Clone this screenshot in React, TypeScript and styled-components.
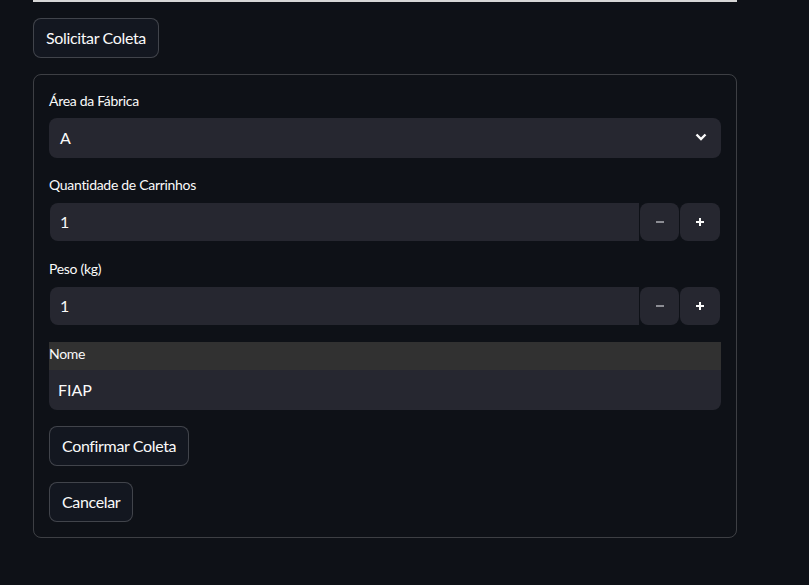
import React from 'react';
import styled, { createGlobalStyle } from 'styled-components';

const Global = createGlobalStyle`
  html, body {
    margin: 0;
    padding: 0;
    background: #0e1117;
  }
  body {
    font-family: Lato, "Source Sans Pro", "Noto Sans", sans-serif;
    color: #fafafa;
  }
`;

const Page = styled.div`
  width: 704px;
  margin-left: 33px;
  display: flex;
  flex-direction: column;
  align-items: flex-start;
  gap: 16px;
  padding-bottom: 47px;
`;

const TopBar = styled.div`
  width: 100%;
  height: 2px;
  background: #d6d6d6;
`;

const Button = styled.button`
  height: 40px;
  padding: 0 12px 1px;
  border: 1px solid rgba(250, 250, 250, 0.2);
  border-radius: 8px;
  background: #131720;
  color: #fafafa;
  font-family: inherit;
  font-size: 16px;
  letter-spacing: -0.35px;
  line-height: 1;
  cursor: pointer;
`;

const Form = styled.div`
  box-sizing: border-box;
  width: 100%;
  padding: 15px 15px;
  border: 1px solid rgba(250, 250, 250, 0.2);
  border-radius: 8px;
  display: flex;
  flex-direction: column;
  align-items: flex-start;
  gap: 16px;
`;

const Field = styled.div`
  width: 100%;
  display: flex;
  flex-direction: column;
`;

const Label = styled.label`
  height: 22px;
  line-height: 22px;
  margin-bottom: 6px;
  font-size: 14px;
  letter-spacing: -0.3px;
  color: #fafafa;
`;

const Select = styled.div`
  height: 40px;
  box-sizing: border-box;
  padding: 0 14px 2px 11px;
  border-radius: 8px;
  background: #262730;
  display: flex;
  align-items: center;
  justify-content: space-between;
  font-size: 16px;
`;

const NumberWrap = styled.div`
  height: 40px;
  box-sizing: border-box;
  border: 1px solid transparent;
  display: flex;
  gap: 1px;
`;

const NumberInput = styled.div`
  flex: 1;
  background: #262730;
  border-radius: 8px 0 0 8px;
  padding: 0 0 2px 10px;
  display: flex;
  align-items: center;
  font-size: 16px;
`;

const Step = styled.div<{ $w: number }>`
  width: ${(p) => p.$w}px;
  background: #262730;
  border-radius: 8px;
  display: flex;
  align-items: center;
  justify-content: center;
`;

const NameLabel = styled.div`
  height: 28px;
  line-height: 24px;
  background: #313131;
  font-size: 14px;
  letter-spacing: -0.3px;
`;

const TextInput = styled.div`
  height: 40px;
  box-sizing: border-box;
  background: #262730;
  border-radius: 0 0 8px 8px;
  padding: 0 0 2px 9px;
  display: flex;
  align-items: center;
  font-size: 16px;
`;

const Chevron = () => (
  <svg width="12" height="8" viewBox="0 0 12 8">
    <polyline points="1.5,1.5 6,6 10.5,1.5" fill="none" stroke="#fafafa" strokeWidth="2.4" />
  </svg>
);

const Minus = () => (
  <svg width="10" height="10" viewBox="0 0 10 10">
    <rect x="1" y="4" width="8" height="2" fill="#8c8d94" />
  </svg>
);

const Plus = () => (
  <svg width="10" height="10" viewBox="0 0 10 10">
    <rect x="1" y="4" width="8" height="2" fill="#fafafa" />
    <rect x="4" y="1" width="2" height="8" fill="#fafafa" />
  </svg>
);

const NumberField = ({ label, value }: { label: string; value: string }) => (
  <Field>
    <Label>{label}</Label>
    <NumberWrap>
      <NumberInput>{value}</NumberInput>
      <Step $w={39}>
        <Minus />
      </Step>
      <Step $w={40}>
        <Plus />
      </Step>
    </NumberWrap>
  </Field>
);

const App = () => {
  return (
    <>
      <Global />
      <Page>
        <TopBar />
        <Button>Solicitar Coleta</Button>
        <Form>
          <Field>
            <Label>Área da Fábrica</Label>
            <Select>
              <span>A</span>
              <Chevron />
            </Select>
          </Field>
          <NumberField label="Quantidade de Carrinhos" value="1" />
          <NumberField label="Peso (kg)" value="1" />
          <Field>
            <NameLabel>Nome</NameLabel>
            <TextInput>FIAP</TextInput>
          </Field>
          <Button>Confirmar Coleta</Button>
          <Button>Cancelar</Button>
        </Form>
      </Page>
    </>
  );
};

export default App;
